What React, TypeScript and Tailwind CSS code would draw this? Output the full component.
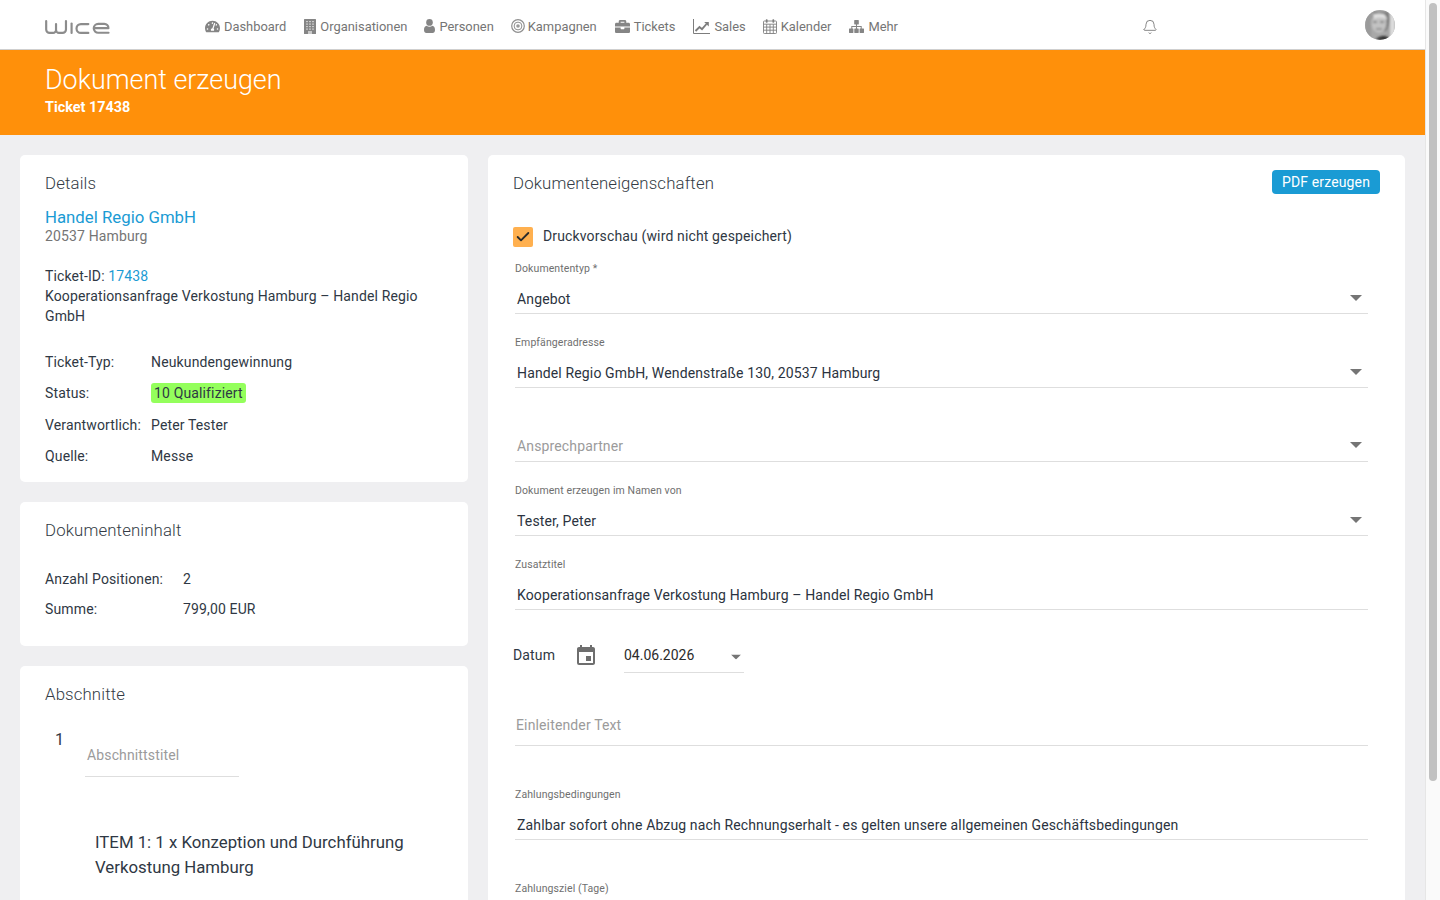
import React from 'react';
import { FaTachometerAlt, FaBriefcase } from 'react-icons/fa';
import { Bell, Check } from 'lucide-react';
import { MdEvent } from 'react-icons/md';

function BuildingIcon() {
  return (
    <svg width="12" height="15" viewBox="0 0 12 15" fill="#858585">
      <rect width="12" height="15" rx="0.5" />
      <g fill="#c9c9c9">
        {[2, 4.5, 7, 9.5].map(y => [2, 5, 8].map(x => <rect key={`${x}-${y}`} x={x} y={y} width="2" height="1.2" />))}
      </g>
      <rect x="4" y="12" width="4" height="3" fill="#c9c9c9" />
    </svg>
  );
}

function UserIcon() {
  return (
    <svg width="11" height="14" viewBox="0 0 11 14" fill="#858585">
      <ellipse cx="5.5" cy="3.4" rx="3.3" ry="3.4" />
      <path d="M0 11c0-2.6 1-4 2.6-4.2.9.7 1.8 1 2.9 1s2-.3 2.9-1C10 7 11 8.4 11 11c0 1.8-1 3-2.4 3H2.4C1 14 0 12.8 0 11z" />
    </svg>
  );
}

function TargetIcon() {
  return (
    <svg width="14" height="14" viewBox="0 0 14 14" fill="none" stroke="#8f8f8f">
      <circle cx="7" cy="7" r="6.3" strokeWidth="1.2" />
      <circle cx="7" cy="7" r="3.9" strokeWidth="1" />
      <circle cx="7" cy="7" r="1.8" fill="#9a9a9a" stroke="none" />
    </svg>
  );
}

function ChartIcon() {
  return (
    <svg width="17" height="15" viewBox="0 0 17 15" fill="none" stroke="#7d7d7d">
      <path d="M.5 0v14.5H17" strokeWidth="1" />
      <path d="M2.5 12l4-4 2.5 2.2L13.5 5" strokeWidth="1.9" />
      <path d="M11.2 3h4.6v4.6z" fill="#7d7d7d" stroke="none" />
    </svg>
  );
}

function CalendarIcon() {
  return (
    <svg width="14" height="15" viewBox="0 0 14 15" fill="none" stroke="#808080" strokeWidth="0.9">
      <rect x="0.5" y="2" width="13" height="12.5" rx="0.8" />
      <path d="M.5 5.2h13M.5 8.1h13M.5 11.2h13M3.7 5.2v9.3M7 5.2v9.3M10.3 5.2v9.3" />
      <rect x="2.8" y="0.3" width="1.8" height="3.4" rx="0.6" fill="#808080" stroke="none" />
      <rect x="9.4" y="0.3" width="1.8" height="3.4" rx="0.6" fill="#808080" stroke="none" />
    </svg>
  );
}

function SitemapIcon() {
  return (
    <svg width="15" height="13" viewBox="0 0 15 13" fill="#858585">
      <rect x="5.2" y="0" width="4.6" height="4.4" rx="0.4" />
      <rect x="0" y="8.6" width="4.4" height="4.4" rx="0.4" />
      <rect x="5.3" y="8.6" width="4.4" height="4.4" rx="0.4" />
      <rect x="10.6" y="8.6" width="4.4" height="4.4" rx="0.4" />
      <path d="M7 4h1v2h4.7v3h-1V7H8v2H7V7H3.3v2h-1V6H7z" />
    </svg>
  );
}

const nav = [
  { label: 'Dashboard', icon: <FaTachometerAlt className="text-[15px] text-[#858585]" />, cls: 'gap-[4px]' },
  { label: 'Organisationen', icon: <BuildingIcon />, cls: 'gap-[4px] ml-[18px]' },
  { label: 'Personen', icon: <UserIcon />, cls: 'gap-[4px] ml-[17px]' },
  { label: 'Kampagnen', icon: <TargetIcon />, cls: 'gap-[3px] ml-[17px]' },
  { label: 'Tickets', icon: <FaBriefcase className="text-[15px] text-[#858585]" />, cls: 'gap-[4px] ml-[18px]' },
  { label: 'Sales', icon: <ChartIcon />, cls: 'gap-[4px] ml-[18px]' },
  { label: 'Kalender', icon: <CalendarIcon />, cls: 'gap-[4px] ml-[17px]' },
  { label: 'Mehr', icon: <SitemapIcon />, cls: 'gap-[4px] ml-[18px]' },
];

function Logo() {
  return (
    <svg width="65" height="16" viewBox="0 0 66 16" fill="none" stroke="#8c8c8c" strokeWidth="2.2" strokeLinecap="round" strokeLinejoin="round">
      <path d="M1.2 2v8.5a3.5 3.5 0 0 0 3.5 3.5h3.5a3 3 0 0 0 3-3V5M11.2 11a3 3 0 0 0 3 3h3.6a3.5 3.5 0 0 0 3.5-3.5V2" />
      <path d="M27 4.5V14" />
      <path d="M44 5h-7.5a4.5 4.5 0 0 0 0 9H44" />
      <path d="M64.5 13.8H54a4.5 4.5 0 0 1 0-9h6a4.2 4.2 0 0 1 4.4 4.4H50" />
    </svg>
  );
}

function Avatar() {
  return (
    <svg width="30" height="30" viewBox="0 0 30 30" className="rounded-full block">
      <defs>
        <filter id="soft"><feGaussianBlur stdDeviation="0.8" /></filter>
      </defs>
      <rect width="30" height="30" fill="#a8a8a8" />
      <g filter="url(#soft)">
        <rect x="25" width="5" height="30" fill="#dcdcdc" />
        <rect width="6" height="30" fill="#9a9a9a" />
        <path d="M8 2h15c3 5 2 13-2 19H12C7 17 6 8 8 2z" fill="#7d7d7d" />
        <ellipse cx="14" cy="13" rx="7.5" ry="10" fill="#c2c2c2" />
        <path d="M8 4h11c2 2 3 4 3 6-4-3-9-3-13-1z" fill="#e0e0e0" />
        <path d="M8 12h4M15 12h4" stroke="#555" strokeWidth="1.2" />
        <path d="M11 19h6" stroke="#666" strokeWidth="1" />
        <path d="M11 30c1-3 5-4 8-4s4 1 6 4z" fill="#333" />
      </g>
    </svg>
  );
}

function Arrow({ className }: { className?: string }) {
  return (
    <svg width="12" height="6" viewBox="0 0 12 6" className={className}>
      <path d="M0 0h12L6 6z" fill="#757575" />
    </svg>
  );
}

function Field({ label, value, placeholder, arrow, height = 'h-[74px]', rowClass = 'pl-[2px]' }: { label?: string; value?: string; placeholder?: string; arrow?: boolean; height?: string; rowClass?: string }) {
  return (
    <div className={`${height} flex flex-col justify-end border-b border-[#dedede]`}>
      {label && <div className="text-[10.5px] tracking-[0.1px] leading-[12px] text-[#6f6f6f] mb-[10px]">{label}</div>}
      <div className={`flex items-center justify-between pr-[6px] h-[28px] ${rowClass}`}>
        <span className={placeholder ? 'text-[#9b9b9b]' : 'text-[#2b3340]'}>{value ?? placeholder}</span>
        {arrow && <Arrow className="mb-[3px]" />}
      </div>
    </div>
  );
}

function Card({ className, children }: { className?: string; children: React.ReactNode }) {
  return <div className={`bg-white rounded-[5px] px-[25px] ${className ?? ''}`}>{children}</div>;
}

function CardTitle({ children }: { children: React.ReactNode }) {
  return <h2 className="text-[16.8px] leading-[24px] font-light text-[#333b45]">{children}</h2>;
}

export default function App() {
  return (
    <div className="h-screen flex overflow-hidden bg-[#efeff1] text-[14px] tracking-[0.14px] text-[#2f3844] font-['Roboto',sans-serif]">
      <div className="w-[1425px] shrink-0 overflow-hidden">
        <header className="h-[50px] bg-white border-b border-[#cfcfcf] flex items-center tracking-normal">
          <div className="w-[205px] pl-[45px] shrink-0 pt-[5px]"><Logo /></div>
          <nav className="flex items-center text-[12.9px] text-[#757575] pt-[4px]">
            {nav.map(n => (
              <a key={n.label} className={`flex items-center ${n.cls}`}>
                {n.icon}
                <span>{n.label}</span>
              </a>
            ))}
          </nav>
          <Bell size={16} strokeWidth={1.1} className="ml-[244px] mt-[5px] text-[#5c5c5c]" />
          <div className="ml-auto mr-[30px] mt-[1px]"><Avatar /></div>
        </header>

        <div className="h-[85px] bg-[#ff900a] pl-[45px] pt-[12px] text-white tracking-normal">
          <h1 className="text-[26.9px] leading-[36px] font-light">Dokument erzeugen</h1>
          <div className="text-[14.4px] leading-[18px] font-bold mt-[1px]">Ticket 17438</div>
        </div>

        <div className="flex items-start gap-[20px] pt-[20px] pl-[20px]">
          <div className="w-[448px] flex flex-col gap-[20px] shrink-0">
            <Card className="h-[327px] pt-[16px]">
              <CardTitle>Details</CardTitle>
              <a className="block mt-[10px] text-[16.8px] tracking-normal leading-[24px] text-[#1a9bd4]">Handel Regio GmbH</a>
              <div className="leading-[14px] text-[#757575]">20537 Hamburg</div>
              <div className="mt-[23px] leading-[20px]">Ticket-ID: <span className="text-[#1a9bd4]">17438</span></div>
              <div className="leading-[20px] pr-[20px]">Kooperationsanfrage Verkostung Hamburg – Handel Regio GmbH</div>
              <div className="mt-[20.7px] grid grid-cols-[106px_1fr] auto-rows-[31.5px] items-center">
                <span>Ticket-Typ:</span><span>Neukundengewinnung</span>
                <span>Status:</span><span><span className="bg-[#94ff5c] rounded-[3px] px-[3px] py-[2px]">10 Qualifiziert</span></span>
                <span>Verantwortlich:</span><span>Peter Tester</span>
                <span>Quelle:</span><span>Messe</span>
              </div>
            </Card>

            <Card className="h-[144px] pt-[16px]">
              <CardTitle>Dokumenteninhalt</CardTitle>
              <div className="mt-[22px] grid grid-cols-[138px_1fr] auto-rows-[30px] items-center">
                <span>Anzahl Positionen:</span><span>2</span>
                <span>Summe:</span><span>799,00 EUR</span>
              </div>
            </Card>

            <Card className="h-[260px] pt-[16px]">
              <CardTitle>Abschnitte</CardTitle>
              <div className="flex mt-[22px] pl-[10px]">
                <span className="text-[16px] leading-[24px] w-[30px]">1</span>
                <div className="w-[154px] h-[49px] border-b border-[#dedede] pl-[2px] pt-[17px] text-[#9b9b9b] leading-[20px]">Abschnittstitel</div>
              </div>
              <p className="mt-[53px] pl-[50px] text-[16.8px] tracking-normal leading-[25px]">ITEM 1: 1 x Konzeption und Durchführung Verkostung Hamburg</p>
            </Card>
          </div>

          <Card className="w-[917px] h-[800px] pt-[15px] shrink-0">
            <div className="flex items-start justify-between">
              <div className="pt-[1px]"><CardTitle>Dokumenteneigenschaften</CardTitle></div>
              <button className="h-[24px] w-[108px] rounded-[4px] bg-[#1a9bd4] text-white text-[14px]">PDF erzeugen</button>
            </div>
            <label className="flex items-center gap-[10px] mt-[32px] h-[20px]">
              <span className="w-[20px] h-[20px] rounded-[2px] bg-[#ffb04f] flex items-center justify-center">
                <Check size={16} strokeWidth={2.8} className="text-[#2b2b2b]" />
              </span>
              <span className="mb-[2px]">Druckvorschau (wird nicht gespeichert)</span>
            </label>
            <div className="w-[853px] ml-[2px] -mt-[7px]">
              <Field label="Dokumententyp *" value="Angebot" arrow />
              <Field label="Empfängeradresse" value="Handel Regio GmbH, Wendenstraße 130, 20537 Hamburg" arrow />
              <Field placeholder="Ansprechpartner" arrow rowClass="pl-[2px] pb-[2px]" />
              <Field label="Dokument erzeugen im Namen von" value="Tester, Peter" arrow />
              <Field label="Zusatztitel" value="Kooperationsanfrage Verkostung Hamburg – Handel Regio GmbH" />
            </div>
            <div className="flex items-start mt-[27px] h-[36px]">
              <span className="w-[61px] pt-[8px] leading-[20px]">Datum</span>
              <MdEvent className="text-[24px] text-[#6e6e6e] mt-[7px]" />
              <div className="ml-[26px] w-[120px] h-[36px] pt-[2px] border-b border-[#dedede] flex items-center justify-between tracking-normal text-[#2b2b2b]">
                <span>04.06.2026</span>
                <Arrow className="mr-[2px] mt-[3px] scale-[0.85]" />
              </div>
            </div>
            <div className="w-[853px] ml-[2px]">
              <Field placeholder="Einleitender Text" height="h-[73px]" rowClass="pl-[1px] pb-[12px]" />
              <Field label="Zahlungsbedingungen" value="Zahlbar sofort ohne Abzug nach Rechnungserhalt - es gelten unsere allgemeinen Geschäftsbedingungen" height="h-[94px]" />
              <div className="text-[10.5px] tracking-[0.1px] leading-[12px] text-[#6f6f6f] mt-[43px]">Zahlungsziel (Tage)</div>
            </div>
          </Card>
        </div>
      </div>

      <div className="w-[15px] shrink-0 bg-[#fafafa] border-l border-[#e6e6e6] pt-[3px] pl-[3px]">
        <div className="w-[8px] h-[778px] rounded-full bg-[#c1c1c1]" />
      </div>
    </div>
  );
}
